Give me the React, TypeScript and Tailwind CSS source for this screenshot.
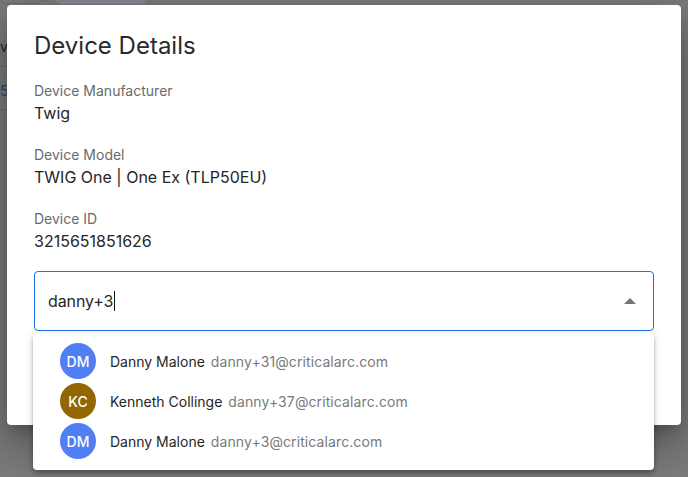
import React from "react";

const options = [
  { initials: "DM", name: "Danny Malone", email: "danny+31@criticalarc.com", color: "bg-[#4f7ff2]" },
  { initials: "KC", name: "Kenneth Collinge", email: "danny+37@criticalarc.com", color: "bg-[#926600]" },
  { initials: "DM", name: "Danny Malone", email: "danny+3@criticalarc.com", color: "bg-[#4f7ff2]" },
];

const fields = [
  { label: "Device Manufacturer", value: "Twig" },
  { label: "Device Model", value: "TWIG One | One Ex (TLP50EU)" },
  { label: "Device ID", value: "3215651851626" },
];

export default function App() {
  return (
    <div
      className="relative h-[477px] w-[688px] overflow-hidden bg-[#7b7b7b]"
      style={{ fontFamily: "Inter, 'Noto Sans', sans-serif" }}
    >
      {/* dimmed page behind */}
      <div className="absolute left-0 top-[-10px] h-[14px] w-[42px] rounded-md border border-[#6c6c6c]" />
      <div className="absolute left-[55px] top-[-10px] h-[14px] w-[92px] rounded-full bg-[#858a92]" />
      <div className="absolute left-0 top-[36px] text-[14px] text-[#222]">vi</div>
      <div className="absolute left-0 top-[66px] h-px w-[10px] bg-[#6e6e6e]" />
      <div className="absolute left-0 top-[80px] text-[14px] text-[#2d4a6e]">5</div>
      <div className="absolute left-0 top-[109px] h-px w-[10px] bg-[#6e6e6e]" />

      {/* dialog */}
      <div className="absolute left-[7px] top-[5px] h-[420px] w-[674px] rounded-[4px] bg-white px-[27px] pt-[25px] shadow-[0_11px_15px_-7px_rgba(0,0,0,0.25),0_24px_38px_3px_rgba(0,0,0,0.16),0_9px_46px_8px_rgba(0,0,0,0.14)]">
        <h2 className="text-[24px] font-normal leading-[32px] text-[#2a2a2a]">Device Details</h2>
        <div className="mt-[19px] flex flex-col gap-[20px]">
          {fields.map((f) => (
            <div key={f.label} className="flex flex-col">
              <div className="text-[14px] leading-[20px] text-[#6b6b6b]">{f.label}</div>
              <div className="text-[16px] leading-[24px] text-[#262626]">{f.value}</div>
            </div>
          ))}
        </div>
        <div className="mt-[18px] flex h-[60px] items-center rounded-[4px] border border-[#1a73e8] pl-[13px] pr-[16px]">
          <span className="text-[16px] tracking-[-0.1px] text-[#262626]">danny+3</span>
          <span className="ml-px h-[20px] w-px bg-[#111]" />
          <div className="flex-1" />
          <svg width="12" height="6" viewBox="0 0 12 6" className="mr-[1px]">
            <path d="M0 6 L6 0 L12 6 Z" fill="#757575" />
          </svg>
        </div>
      </div>

      {/* dropdown */}
      <div className="absolute left-[33px] top-[333px] w-[621px] rounded-[4px] bg-white pb-[9px] pt-[8px] shadow-[0_2px_4px_-1px_rgba(0,0,0,0.2),0_4px_5px_0_rgba(0,0,0,0.14),0_1px_10px_0_rgba(0,0,0,0.12)]">
        {options.map((o, i) => (
          <div key={i} className="flex h-[40px] items-center pl-[27px]">
            <div className={`flex h-[36px] w-[36px] items-center justify-center rounded-full ${o.color} text-[14px] font-medium text-white`}>
              {o.initials}
            </div>
            <span className="ml-[14px] text-[14px] text-[#262626]">{o.name}</span>
            <span className="ml-[6px] text-[14px] tracking-[0.1px] text-[#7a7a7a]">{o.email}</span>
          </div>
        ))}
      </div>
    </div>
  );
}
